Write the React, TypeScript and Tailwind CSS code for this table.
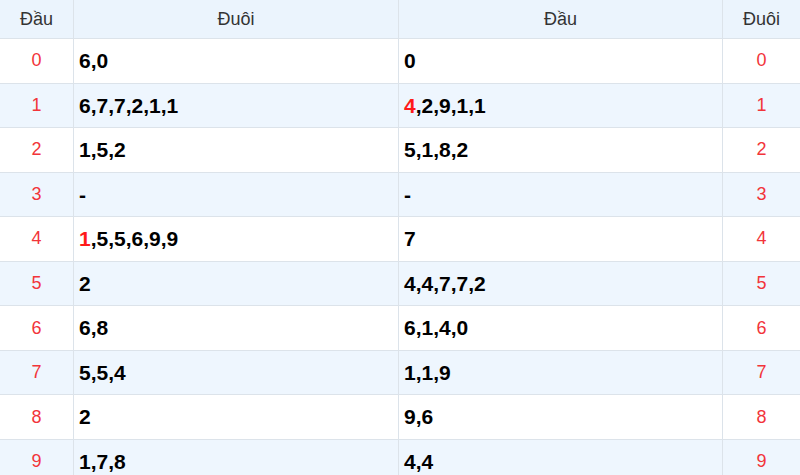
import React from "react";

const rows: { d: string; dau: React.ReactNode; duoi: React.ReactNode }[] = [
  { d: "0", dau: "6,0", duoi: "0" },
  { d: "1", dau: "6,7,7,2,1,1", duoi: <><span className="text-[#ff1a1a]">4</span>,2,9,1,1</> },
  { d: "2", dau: "1,5,2", duoi: "5,1,8,2" },
  { d: "3", dau: "-", duoi: "-" },
  { d: "4", dau: <><span className="text-[#ff1a1a]">1</span>,5,5,6,9,9</>, duoi: "7" },
  { d: "5", dau: "2", duoi: "4,4,7,7,2" },
  { d: "6", dau: "6,8", duoi: "6,1,4,0" },
  { d: "7", dau: "5,5,4", duoi: "1,1,9" },
  { d: "8", dau: "2", duoi: "9,6" },
  { d: "9", dau: "1,7,8", duoi: "4,4" },
];

export default function App() {
  return (
    <div className="w-[800px] h-[475px] overflow-hidden bg-white font-['Liberation_Sans',Arial,Helvetica,sans-serif]">
      <div className="grid grid-cols-[74px_325px_324px_77px] h-[39px] bg-[#ebf4fd] border-b border-[#dce3ea] text-[18px] text-[#333]">
        <div className="flex items-center justify-center border-r border-[#dce3ea]">Đầu</div>
        <div className="flex items-center justify-center border-r border-[#dce3ea]">Đuôi</div>
        <div className="flex items-center justify-center border-r border-[#dce3ea]">Đầu</div>
        <div className="flex items-center justify-center">Đuôi</div>
      </div>
      {rows.map((r, i) => (
        <div
          key={r.d}
          className={`grid grid-cols-[74px_325px_324px_77px] h-[44.56px] border-b border-[#dce3ea] ${
            i % 2 === 1 ? "bg-[#eef6fe]" : "bg-white"
          }`}
        >
          <div className="flex items-center justify-center border-r border-[#dce3ea] text-[18px] text-[#f2343a]">
            {r.d}
          </div>
          <div className="flex items-center pl-[5px] border-r border-[#dce3ea] text-[21px] font-bold text-black">
            {r.dau}
          </div>
          <div className="flex items-center pl-[5px] border-r border-[#dce3ea] text-[21px] font-bold text-black">
            {r.duoi}
          </div>
          <div className="flex items-center justify-center text-[18px] text-[#f2343a]">{r.d}</div>
        </div>
      ))}
    </div>
  );
}
